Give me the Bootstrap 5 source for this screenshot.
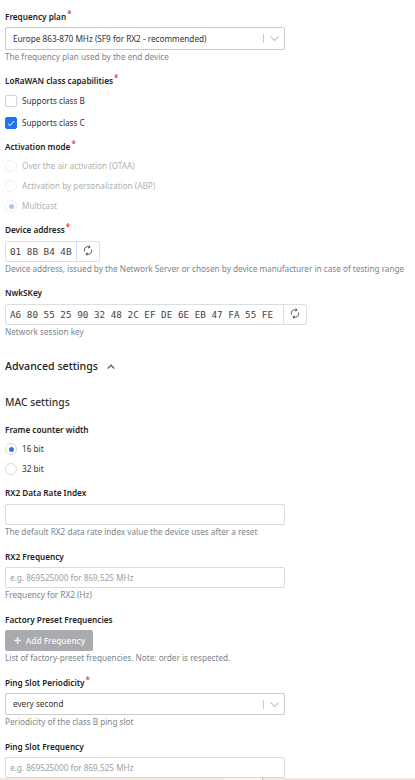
<!DOCTYPE html>
<html lang="en"><head><meta charset="utf-8">
<link href="https://cdn.jsdelivr.net/npm/bootstrap@5.3.0/dist/css/bootstrap.min.css" rel="stylesheet">
<style>
html,body{height:780px;overflow:hidden}
body{background:#fff;font-family:"Noto Sans",sans-serif;font-size:8.2px;line-height:12px;color:#333}
.pg{padding:11px 5px 0;height:778px;overflow:hidden}
.pg-foot{height:2px;background:#f5e6dc;display:flex}
.pg-foot span{display:block;margin-left:224px;width:39px;background:#fbf5f0;border-right:1px solid #bdb8b2}
.fld{margin-bottom:13px}
.fld-t{margin-bottom:12px}
.lbl{font-weight:600;font-size:8.2px;line-height:12px;margin-bottom:4px;color:#222;display:block;white-space:nowrap}
.lbl-5{margin-bottom:5px}
.lbl-7{margin-bottom:7px}
.lbl-8{margin-bottom:8px}
.req{color:#f0333a;font-size:8px;position:relative;top:-3px;left:1px;line-height:0}
.hint{color:#7d848c;font-size:8.2px;line-height:12px;margin-top:1px;white-space:nowrap}
.box{width:280px;height:21px;border:1px solid #d8dadc;border-radius:2px;background:#fff;display:flex;align-items:center;padding:0 4px;color:#333}
.box .ph{color:#9aa0a6}
.sel{justify-content:space-between;padding:0 0 0 7px;border-color:#c8cacd}
.sel-a{height:23px}
.sel-b{height:22px}
.sel-ind{display:flex;align-items:center;height:9px;border-left:1px solid #c9cbce;padding:0 4px 0 5px}
.gen{display:inline-flex;height:21px;border:1px solid #dcdee0;border-radius:2px;align-items:stretch;vertical-align:top}
.gen-val{font-family:"DejaVu Sans Mono",monospace;font-size:9.3px;padding:0 4px;display:flex;align-items:center;white-space:pre;color:#444;background:#fff}
.gen-btn{width:23px;border-left:1px solid #dcdee0;display:flex;justify-content:center;padding-top:3px}
.gen-row{height:21px}
.opt{display:flex;align-items:center;gap:5px;height:12px;margin-bottom:8px}
.opt-10{margin-bottom:10px}
.chk{width:12px;height:12px;border:1px solid #d0d2d5;border-radius:2px;background:#fff;flex:none;display:flex;align-items:center;justify-content:center}
.chk.on{background:#1c74f3;border-color:#1c74f3}
.rad{width:12px;height:12px;border:1px solid #d8dadc;border-radius:50%;background:#fff;flex:none;display:flex;align-items:center;justify-content:center}
.rad i{width:5px;height:5px;border-radius:50%;background:#2a78f0;display:block}
.dim{opacity:.4}
.h-adv{font-size:10.6px;line-height:16px;font-weight:500;color:#222;display:flex;align-items:center;gap:9px;margin:20px 0}
.h-mac{font-size:10.3px;line-height:16px;font-weight:500;color:#333;margin-bottom:14px}
.add-btn{display:flex;align-items:center;gap:4px;height:21px;width:88px;justify-content:center;background:#a9abae;border:0;border-radius:2px;color:#f1f1f1;font-weight:600;font-size:8.2px;padding:0}
</style></head><body>
<div class="pg">
<div class="fld-t"><span class="lbl">Frequency plan<span class="req">*</span></span>
<div class="box sel sel-a"><span>Europe 863-870 MHz (SF9 for RX2 - recommended)</span><span class="sel-ind"><svg width="11" height="7" viewBox="0 0 11 7"><path d="M1.5 1.5 5.5 5.5 9.5 1.5" fill="none" stroke="#c4c6c9" stroke-width="1.1"/></svg></span></div>
<div class="hint">The frequency plan used by the end device</div></div>
<div class="fld-t"><span class="lbl lbl-8">LoRaWAN class capabilities<span class="req">*</span></span>
<div class="opt opt-10"><span class="chk"></span><span>Supports class B</span></div>
<div class="opt"><span class="chk on"><svg width="8" height="7" viewBox="0 0 8 7"><path d="M.8 3.5 3 5.6 7.2 1" fill="none" stroke="#fff" stroke-width="1"/></svg></span><span>Supports class C</span></div></div>
<div class="fld-t"><span class="lbl lbl-7">Activation mode<span class="req">*</span></span>
<div class="opt dim"><span class="rad"></span><span>Over the air activation (OTAA)</span></div>
<div class="opt dim"><span class="rad"></span><span>Activation by personalization (ABP)</span></div>
<div class="opt dim"><span class="rad"><i></i></span><span>Multicast</span></div></div>
<div class="fld-t"><span class="lbl lbl-5">Device address<span class="req">*</span></span>
<div class="gen-row"><div class="gen"><span class="gen-val">01 8B B4 4B</span><span class="gen-btn"><svg width="10" height="11" viewBox="0 0 10 11"><path d="M1.5 6.5A3.6 3.6 0 0 1 6.5 2M8.5 4.5A3.6 3.6 0 0 1 3.5 9M6 .5 7 2.3 5 3M4 10.5 3 8.7 5 8" fill="none" stroke="#444" stroke-width=".9"/></svg></span></div></div>
<div class="hint">Device address, issued by the Network Server or chosen by device manufacturer in case of testing range</div></div>
<div class="fld-t"><span class="lbl lbl-5">NwkSKey</span>
<div class="gen-row"><div class="gen"><span class="gen-val">A6 80 55 25 90 32 48 2C EF DE 6E EB 47 FA 55 FE </span><span class="gen-btn"><svg width="10" height="11" viewBox="0 0 10 11"><path d="M1.5 6.5A3.6 3.6 0 0 1 6.5 2M8.5 4.5A3.6 3.6 0 0 1 3.5 9M6 .5 7 2.3 5 3M4 10.5 3 8.7 5 8" fill="none" stroke="#444" stroke-width=".9"/></svg></span></div></div>
<div class="hint">Network session key</div></div>
<div class="h-adv">Advanced settings <svg width="8" height="5" viewBox="0 0 8 5"><path d="M.8 4.5 4 1.2 7.2 4.5" fill="none" stroke="#555" stroke-width="1.2"/></svg></div>
<div class="h-mac">MAC settings</div>
<div class="fld-t"><span class="lbl lbl-7">Frame counter width</span>
<div class="opt"><span class="rad"><i></i></span><span>16 bit</span></div>
<div class="opt"><span class="rad"></span><span>32 bit</span></div></div>
<div class="fld"><span class="lbl lbl-5">RX2 Data Rate Index</span><div class="box"></div><div class="hint">The default RX2 data rate index value the device uses after a reset</div></div>
<div class="fld"><span class="lbl">RX2 Frequency</span><div class="box"><span class="ph">e.g. 869525000 for 869,525 MHz</span></div><div class="hint">Frequency for RX2 (Hz)</div></div>
<div class="fld"><span class="lbl">Factory Preset Frequencies</span><button class="add-btn" type="button"><svg width="9" height="9" viewBox="0 0 9 9"><path d="M4.5 1v7M1 4.5h7" stroke="#eee" stroke-width="1.6"/></svg>Add Frequency</button><div class="hint">List of factory-preset frequencies. Note: order is respected.</div></div>
<div class="fld"><span class="lbl">Ping Slot Periodicity<span class="req">*</span></span>
<div class="box sel sel-b"><span>every second</span><span class="sel-ind"><svg width="11" height="7" viewBox="0 0 11 7"><path d="M1.5 1.5 5.5 5.5 9.5 1.5" fill="none" stroke="#c4c6c9" stroke-width="1.1"/></svg></span></div>
<div class="hint">Periodicity of the class B ping slot</div></div>
<div><span class="lbl">Ping Slot Frequency</span><div class="box"><span class="ph">e.g. 869525000 for 869,525 MHz</span></div></div>
</div>
<div class="pg-foot"><span></span></div>
<script src="https://cdn.jsdelivr.net/npm/bootstrap@5.3.0/dist/js/bootstrap.bundle.min.js"></script>
</body></html>
